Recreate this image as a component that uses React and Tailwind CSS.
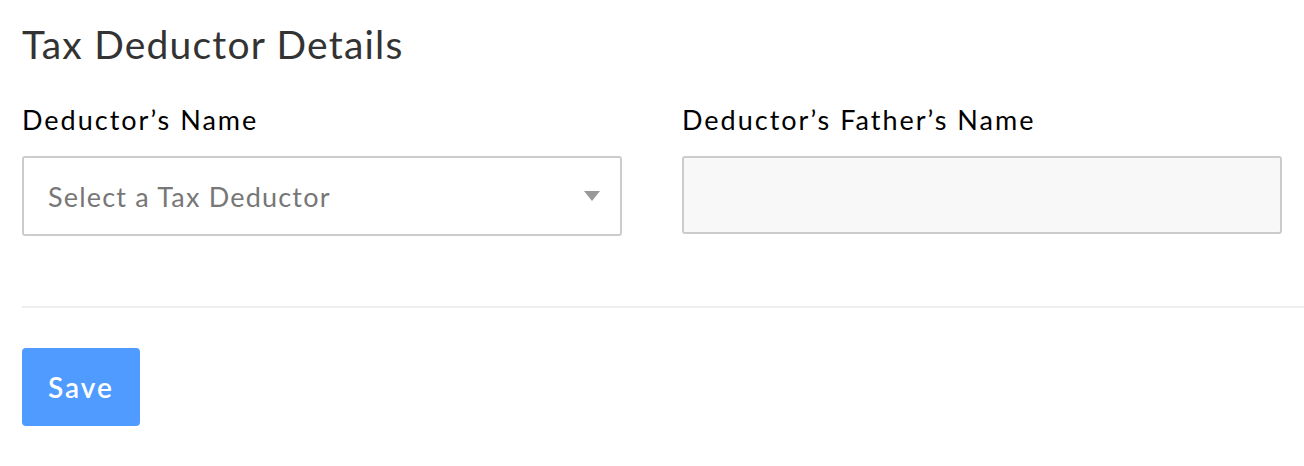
import React from 'react';

const Field = ({ label, children }) => (
  <div className="flex w-[600px] flex-col">
    <label className="text-[27px] leading-none tracking-[2px] text-black">{label}</label>
    <div className="mt-[23px]">{children}</div>
  </div>
);

export default function App() {
  return (
    <div className="h-[466px] w-[1304px] overflow-hidden bg-white pl-[22px] font-['Lato',sans-serif]">
      <h2 className="pt-[24px] text-[39px] leading-[40px] tracking-[1.2px] text-[#333]">Tax Deductor Details</h2>
      <div className="mt-[42px] flex gap-[60px]">
        <Field label="Deductor’s Name">
          <div className="flex h-[80px] items-center justify-between rounded-[3px] border-2 border-[#ccc] bg-white pl-[24px] pr-[20px]">
            <span className="pt-[2px] text-[27px] tracking-[1.2px] text-[#777]">Select a Tax Deductor</span>
            <svg width="16" height="10" viewBox="0 0 16 10">
              <path d="M0 0 L16 0 L8 10 Z" fill="#999" />
            </svg>
          </div>
        </Field>
        <Field label="Deductor’s Father’s Name">
          <div className="h-[78px] rounded-[3px] border-2 border-[#ccc] bg-[#f8f8f8]" />
        </Field>
      </div>
      <div className="mt-[70px] h-[2px] bg-[#eee]" />
      <button
        type="button"
        className="mt-[40px] flex h-[78px] w-[118px] items-center justify-center rounded-[4px] bg-[#4f9bff] text-[28px] font-semibold tracking-[2px] text-white"
      >
        Save
      </button>
    </div>
  );
}
